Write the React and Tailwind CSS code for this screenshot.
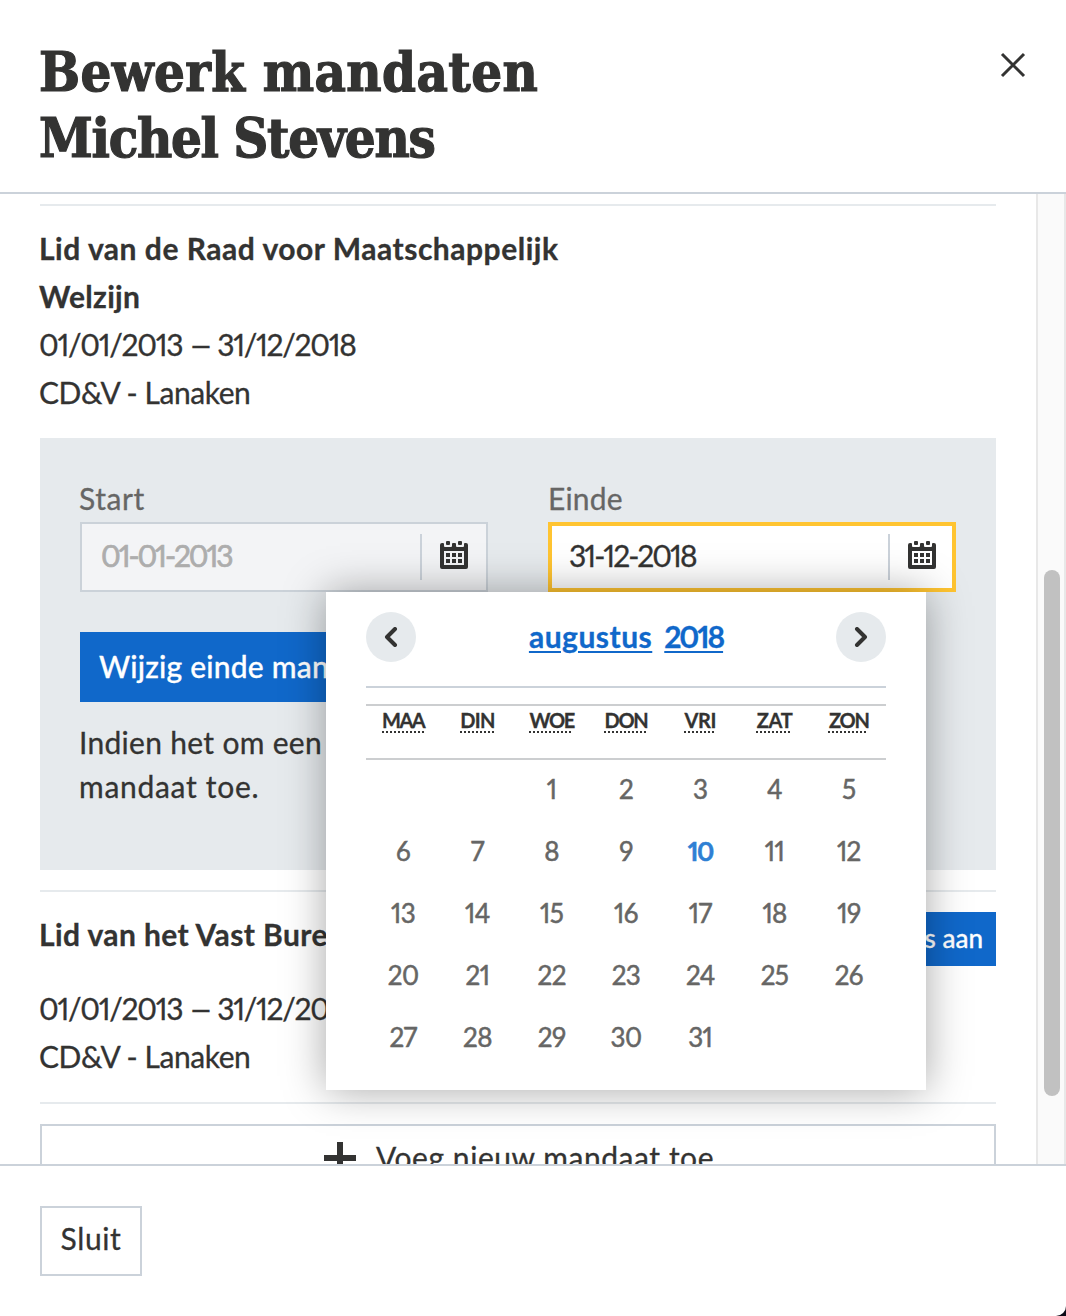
import React from 'react';

const weekdays = [
  { label: 'MAA', cls: 'tracking-[-1.5px]' },
  { label: 'DIN', cls: 'tracking-[-0.8px]' },
  { label: 'WOE', cls: 'tracking-[-1.4px]' },
  { label: 'DON', cls: 'tracking-[-1.2px]' },
  { label: 'VRI', cls: 'tracking-[-0.4px]' },
  { label: 'ZAT', cls: 'tracking-[-0.4px]' },
  { label: 'ZON', cls: 'tracking-[-1.2px]' },
];

const days = [null, null, ...Array.from({ length: 31 }, (_, i) => i + 1)];

function CalendarIcon() {
  return (
    <svg width="28" height="28" viewBox="0 0 28 28" fill="#333332">
      <path
        fillRule="evenodd"
        d="M2 2h1a1 1 0 0 1 1 1v2a1 1 0 0 0 1 1h6a1 1 0 0 0 1-1V3a1 1 0 0 1 1-1h2a1 1 0 0 1 1 1v2a1 1 0 0 0 1 1h6a1 1 0 0 0 1-1V3a1 1 0 0 1 1-1h1a2 2 0 0 1 2 2v22a2 2 0 0 1-2 2H2a2 2 0 0 1-2-2V4a2 2 0 0 1 2-2ZM4 10v14h20V10Z"
      />
      <rect x="6" y="0" width="4" height="4" rx="1" />
      <rect x="18" y="0" width="4" height="4" rx="1" />
      <path d="M6 12h4v4H6zM12 12h4v4h-4zM18 12h4v4h-4zM6 18h4v4H6zM12 18h4v4h-4zM18 18h4v4h-4z" />
    </svg>
  );
}

function Chevron({ d }) {
  return (
    <button className="flex size-[50px] items-center justify-center rounded-full bg-[#e6eaed]">
      <svg width="14" height="20" viewBox="0 0 14 20" fill="none" stroke="#333332" strokeWidth="4" strokeLinecap="round" strokeLinejoin="round">
        <path d={d} />
      </svg>
    </button>
  );
}

function Period() {
  return (
    <div className="tracking-[-1.3px] proportional-nums">
      01/01/2013 <span className="mx-[3px] inline-block scale-x-140">–</span> 31/12/2018
    </div>
  );
}

function DatePicker() {
  return (
    <div className="absolute top-full right-[30px] z-10 h-[498px] w-[600px] bg-white px-10 pt-5 shadow-[0_0_40px_rgba(0,0,0,0.35)]">
      <div className="flex h-[76px] items-start justify-between border-b-2 border-[#cbd2da]">
        <Chevron d="M11 2 3 10l8 8" />
        <div className="flex h-[48px] items-center gap-3 text-[30px] font-bold text-[#1068ca] underline decoration-2 underline-offset-[3px]">
          <span className="tracking-[0.5px]">augustus</span>
          <span className="tracking-[-2.1px] proportional-nums">2018</span>
        </div>
        <Chevron d="M3 2l8 8-8 8" />
      </div>
      <div className="mt-4 grid h-14 grid-cols-7 border-y-2 border-[#ccced0] text-center text-[20px] leading-[29px] font-bold">
        {weekdays.map((w) => (
          <div key={w.label}>
            <abbr className={`${w.cls} underline decoration-dotted decoration-2 underline-offset-[3px]`}>{w.label}</abbr>
          </div>
        ))}
      </div>
      <div className="-mt-0.5 grid grid-cols-7 text-center text-[26px] leading-[62px] tracking-[-0.6px] text-[#666665] proportional-nums [-webkit-text-stroke:0.5px]">
        {days.map((d, i) => (
          <div key={i} className={d === 10 ? 'font-bold tracking-[-1.6px] text-[#2f80d4]' : ''}>{d}</div>
        ))}
      </div>
    </div>
  );
}

export default function App() {
  return (
    <div className="h-[1316px] w-[1066px] overflow-hidden bg-[#0b0b16] font-['Lato',sans-serif] text-[#333332] [-webkit-text-stroke:0.3px]">
      <div className="flex h-full flex-col rounded-br-[10px] bg-white">
        <header className="flex h-[194px] shrink-0 items-start justify-between border-b-2 border-[#cbd2da] pt-[39px] pr-10 pl-[39px]">
          <h1 className="font-['DejaVu_Serif_Condensed','DejaVu_Serif',serif] text-[54px] leading-[66px] font-bold [-webkit-text-stroke:1.2px]">
            <span className="block tracking-[0.4px]">Bewerk mandaten</span>
            <span className="block tracking-[-1.3px]">Michel Stevens</span>
          </h1>
          <button className="mt-[13px]">
            <svg width="26" height="26" viewBox="0 0 26 26" stroke="#333332" strokeWidth="3">
              <path d="M2 2l22 22M24 2L2 24" />
            </svg>
          </button>
        </header>

        <div className="flex h-[970px] shrink-0 overflow-hidden">
          <main className="flex-1 pt-2.5 pr-10 pl-10 text-[30px]">
            <section className="border-t-2 border-[#e6eaed] pt-[18px]">
              <div className="-ml-px leading-[48px]">
                <div className="font-bold tracking-[0.52px]">Lid van de Raad voor Maatschappelijk</div>
                <div className="font-bold tracking-[0.3px]">Welzijn</div>
                <Period />
                <div className="tracking-[-0.45px]">CD&amp;V - Lanaken</div>
              </div>
              <div className="mt-[22px] h-[432px] bg-[#e6eaed] px-10 pt-[38px]">
                <div className="flex gap-[60px]">
                  <div className="w-[408px]">
                    <div className="-ml-px h-[46px] leading-[44px] tracking-[0.6px] text-[#666665]">Start</div>
                    <div className="flex h-[70px] items-center border-2 border-[#cbd2d9] bg-[#f3f4f6] pr-[18px] pl-[19px]">
                      <span className="flex-1 pb-1 tracking-[-2.1px] text-[#adadad] proportional-nums [-webkit-text-stroke:0.7px]">01-01-2013</span>
                      <span className="flex h-[46px] items-center border-l-2 border-[#cbd2da] pb-1 pl-[18px]"><CalendarIcon /></span>
                    </div>
                  </div>
                  <div className="relative w-[408px]">
                    <div className="h-[46px] leading-[44px] tracking-[0.2px] text-[#666665]">Einde</div>
                    <div className="flex h-[70px] items-center border-4 border-[#ffc431] bg-white pr-4 pl-[17px]">
                      <span className="flex-1 pb-1 tracking-[-2px] proportional-nums">31-12-2018</span>
                      <span className="flex h-[46px] items-center border-l-2 border-[#cbd2da] pb-1 pl-[18px]"><CalendarIcon /></span>
                    </div>
                    <DatePicker />
                  </div>
                </div>
                <button className="mt-10 block h-[70px] bg-[#1068ca] px-[19px] pb-0.5 font-medium tracking-[0.2px] whitespace-nowrap text-white">
                  Wijzig einde mandaat
                </button>
                <p className="mt-[18px] -ml-px leading-[44px]">
                  <span className="block tracking-[0.3px]">Indien het om een</span>
                  <span className="block tracking-[0.7px]">mandaat toe.</span>
                </p>
              </div>
            </section>

            <section className="mt-5 border-t-2 border-[#e6eaed] pt-[18px]">
              <div className="flex h-[75px] items-start justify-between leading-[48px]">
                <div className="-ml-px font-bold tracking-[0.4px]">Lid van het Vast Bureau</div>
                <button className="mt-0.5 h-[54px] bg-[#1068ca] px-[13px] pb-0.5 text-[26px] font-medium text-white">Pas aan</button>
              </div>
              <div className="-mt-px -ml-px leading-[48px]">
                <Period />
                <div className="tracking-[-0.45px]">CD&amp;V - Lanaken</div>
              </div>
            </section>

            <div className="mt-[22px] border-t-2 border-[#e6eaed] pt-5">
              <button className="flex h-[70px] w-full items-center justify-center gap-5 border-2 border-[#cbd2da] pb-1 pl-0.5 tracking-[0.55px]">
                <svg width="32" height="32" viewBox="0 0 32 32" fill="#333332" className="mt-0.5">
                  <path d="M13 0h6v13h13v6H19v13h-6V19H0v-6h13z" />
                </svg>
                Voeg nieuw mandaat toe
              </button>
            </div>
          </main>
          <div className="w-[30px] border-x-2 border-[#e8e8e8] bg-[#fafafa] pt-[376px] pr-1 pl-1.5">
            <div className="h-[526px] rounded-full bg-[#c1c1c1]" />
          </div>
        </div>

        <footer className="flex-1 border-t-2 border-[#cbd2da] px-10 pt-10">
          <button className="h-[70px] w-[102px] border-2 border-[#cbd2da] pb-1.5 text-[30px] tracking-[0.6px]">Sluit</button>
        </footer>
      </div>
    </div>
  );
}
